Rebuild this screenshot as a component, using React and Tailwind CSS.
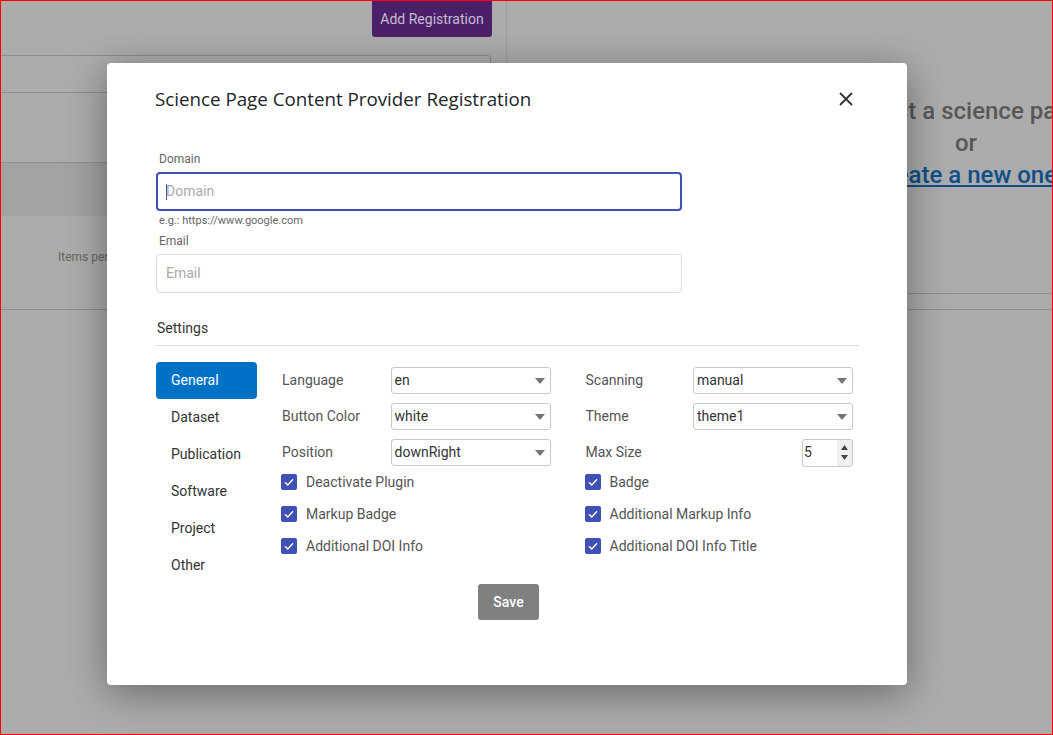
import React from "react";

function Caret() {
  return (
    <svg width="10" height="6" viewBox="0 0 10 6" className="shrink-0">
      <path d="M0 0 L10 0 L5 6 Z" fill="#757575" />
    </svg>
  );
}

function Select({ value }) {
  return (
    <div className="flex h-[27px] w-[160px] items-center justify-between rounded-[3px] border border-[#c8c8c8] bg-white pl-[3px] pr-[5px] text-[14px] text-[#333]">
      <span>{value}</span>
      <Caret />
    </div>
  );
}

function Check({ label }) {
  return (
    <div className="flex h-[32px] items-center gap-[9px]">
      <div className="flex h-[16px] w-[16px] items-center justify-center rounded-[2px] bg-[#3f51b5]">
        <svg width="12" height="12" viewBox="0 0 12 12">
          <path d="M2 6.2 L4.8 9 L10 3.2" stroke="white" strokeWidth="1.4" fill="none" />
        </svg>
      </div>
      <span className="text-[14px] text-[#555]">{label}</span>
    </div>
  );
}

function Field({ label, children }) {
  return (
    <div className="flex h-[27px] items-center">
      <span className="w-[108px] text-[14px] text-[#555]">{label}</span>
      <div className="flex flex-1 justify-end">{children}</div>
    </div>
  );
}

export default function App() {
  const tabs = ["General", "Dataset", "Publication", "Software", "Project", "Other"];
  return (
    <div className="relative h-[735px] w-[1053px] overflow-hidden border border-[#ff0000] bg-[#acacac] font-['Roboto',sans-serif]">
      {/* underlying page (dimmed) */}
      <div className="flex w-[1430px]">
        <div className="flex w-[506px] shrink-0 flex-col border-r border-[#a0a0a0]">
          <div className="flex h-[54px] justify-end pr-[14px]">
            <div className="flex h-[36px] w-[120px] items-center justify-center rounded-b-[3px] bg-[#4b2068] text-[14px] text-[#c6bcd2]">
              Add Registration
            </div>
          </div>
          <div className="h-[38px] w-[490px] rounded-tr-[4px] border-y border-r border-[#8e8e8e]"></div>
          <div className="h-[69px]"></div>
          <div className="h-[54px] border-t border-[#8e8e8e] bg-[#a3a3a3]"></div>
          <div className="flex h-[94px] items-center pl-[57px] pb-[13px] text-[12px] text-[#6b655e]">Items per page</div>
        </div>
        <div className="flex w-[918px] shrink-0 flex-col items-center pt-[94px] text-[24px] font-medium leading-[32px] text-[#585858]">
          <div>Select a science page</div>
          <div>or</div>
          <div className="text-[#0e4f8a] underline">create a new one</div>
        </div>
      </div>
      <div className="absolute left-[506px] right-0 top-[292px] h-px bg-[#8e8e8e]"></div>
      <div className="absolute left-0 right-0 top-[308px] h-px bg-[#8e8e8e]"></div>

      {/* modal */}
      <div className="absolute left-[106px] top-[62px] h-[622px] w-[800px] rounded-[4px] bg-white shadow-[0_8px_40px_rgba(0,0,0,0.4)]">
        <div className="flex h-[72px] items-center justify-between pl-[48px] pr-[54px]">
          <h2 className="font-['Open_Sans',sans-serif] text-[18.75px] text-[#212529]">
            Science Page Content Provider Registration
          </h2>
          <svg width="14" height="14" viewBox="0 0 14 14">
            <path d="M1 1 L13 13 M13 1 L1 13" stroke="#333" strokeWidth="1.8" />
          </svg>
        </div>

        <div className="pl-[49px] pt-[16px]">
          <div className="w-[526px]">
            <div className="pl-[3px] text-[12px] leading-[16px] text-[#666]">Domain</div>
            <div className="mt-[5px] flex h-[39px] items-center rounded-[4px] border-2 border-[#3f51b5] pl-[8px] text-[14px] text-[#aaa]">
              <span className="mr-[-1px] h-[16px] w-px bg-[#3f51b5]"></span>
              Domain
            </div>
            <div className="mt-[3px] pl-[3px] text-[11px] leading-[14px] text-[#666]">e.g.: https://www.google.com</div>
            <div className="mt-[5px] pl-[3px] text-[12px] leading-[16px] text-[#666]">Email</div>
            <div className="mt-[5px] flex h-[39px] items-center rounded-[4px] border border-[#ddd] pl-[9px] text-[14px] text-[#aaa]">
              Email
            </div>
          </div>

          <div className="mt-[25px] w-[703px] border-b border-[#ddd] pb-[7px] pl-[1px] text-[14px] leading-[20px] text-[#333]">
            Settings
          </div>

          <div className="mt-[16px] flex">
            <div className="flex w-[101px] flex-col">
              {tabs.map((t, i) => (
                <div
                  key={t}
                  className={
                    i === 0
                      ? "flex h-[37px] items-center rounded-[4px] bg-[#0072c6] pl-[15px] text-[14px] text-white"
                      : "flex h-[37px] items-center pl-[15px] text-[14px] text-[#333]"
                  }
                >
                  {t}
                </div>
              ))}
            </div>
            <div className="ml-[25px] grid w-[571px] grid-cols-2 gap-x-[34px] pt-[5px]">
              <div className="flex flex-col">
                <div className="flex flex-col gap-[9px]">
                  <Field label="Language"><Select value="en" /></Field>
                  <Field label="Button Color"><Select value="white" /></Field>
                  <Field label="Position"><Select value="downRight" /></Field>
                </div>
                <div className="-ml-[1px]">
                  <Check label="Deactivate Plugin" />
                  <Check label="Markup Badge" />
                  <Check label="Additional DOI Info" />
                </div>
              </div>
              <div className="flex flex-col pl-[1px]">
                <div className="flex flex-col gap-[9px]">
                  <Field label="Scanning"><Select value="manual" /></Field>
                  <Field label="Theme"><Select value="theme1" /></Field>
                  <div className="flex h-[27px] items-center">
                    <span className="w-[108px] text-[14px] text-[#555]">Max Size</span>
                    <div className="flex flex-1 justify-end">
                      <div className="flex h-[28px] w-[51px] items-stretch overflow-hidden rounded-[3px] border border-[#c8c8c8] bg-white">
                        <div className="flex flex-1 items-center pl-[1px] text-[14px] text-[#333]">5</div>
                        <div className="flex w-[15px] flex-col items-center justify-center gap-[5px] bg-[#f0f0f0]">
                          <svg width="7" height="5" viewBox="0 0 7 5"><path d="M0 5 L7 5 L3.5 0 Z" fill="#444" /></svg>
                          <svg width="7" height="5" viewBox="0 0 7 5"><path d="M0 0 L7 0 L3.5 5 Z" fill="#444" /></svg>
                        </div>
                      </div>
                    </div>
                  </div>
                </div>
                <div className="-ml-[1px]">
                  <Check label="Badge" />
                  <Check label="Additional Markup Info" />
                  <Check label="Additional DOI Info Title" />
                </div>
              </div>
            </div>
          </div>
        </div>

        <div className="flex justify-center pl-[3px]">
          <div className="flex h-[36px] w-[61px] items-center justify-center rounded-[3px] bg-[#808080] text-[14px] font-medium text-white">
            Save
          </div>
        </div>
      </div>
    </div>
  );
}
